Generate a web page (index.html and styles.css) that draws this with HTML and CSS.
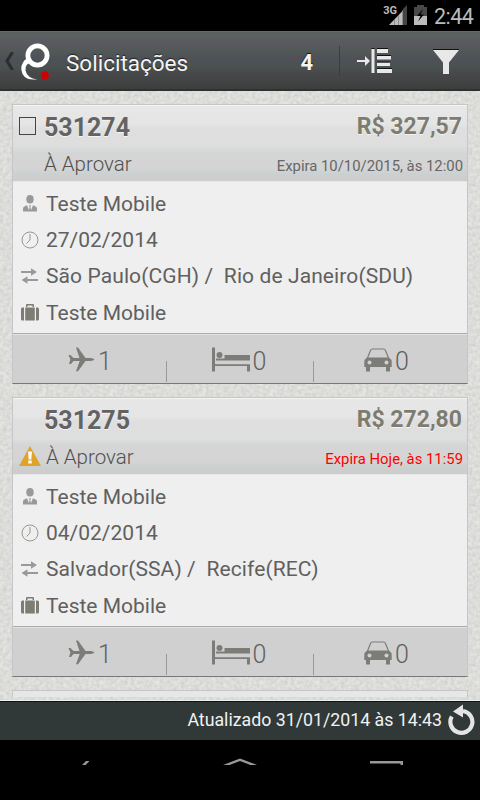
FILE: index.html
```html
<!DOCTYPE html>
<html lang="pt-BR">
<head>
  <meta charset="utf-8">
  <meta name="viewport" content="width=device-width, initial-scale=1">
  <title>Solicitações</title>
  <link rel="stylesheet" href="styles.css">
</head>
<body>
  <svg class="sprite">
    <symbol id="user" viewBox="0 0 14 17">
      <ellipse cx="7" cy="4.3" rx="3.7" ry="4.3"/>
      <path d="M0 16.5v-3q0-2 4-3.2l2 5 .6-3.6-.6-1.4h2l-.6 1.4.6 3.6 2-5q4 1.200 4 3.200v3z"/>
    </symbol>
    <symbol id="clock" viewBox="0 0 18 18">
      <circle cx="9" cy="9" r="8" fill="none" stroke="currentColor"/>
      <path d="M9 3v6l-3.500 3.500" fill="none" stroke="currentColor"/>
    </symbol>
    <symbol id="route" viewBox="0 0 17 16">
      <path d="M0 3h10V.3l6 3.700-6 3.700V5H0zM17 11H6.500V8.200L.5 12l6 3.700V13H17z"/>
    </symbol>
    <symbol id="bag" viewBox="0 0 18 17">
      <path d="M5 3V1q0-1 1-1h6q1 0 1 1v2h-1.500V1.500h-5V3zM1.500 3.500H3v13H1.500Q0 16.500 0 15V5q0-1.500 1.500-1.500zM4.200 3.500h9.600v13H4.200zM15 3.500h1.500Q18 3.500 18 5v10q0 1.500-1.500 1.500H15z"/>
    </symbol>
    <symbol id="plane" viewBox="0 0 27 25">
      <path d="M26.500 12.500q-1 1.300-4 1.500h-5L10 24.300H8L11.700 14H5.500L3 17H1l1.400-4.500L.5 8H2.500L5.500 11h6L8 .5h2L17.500 11h5q3 .2 4 1.500z"/>
    </symbol>
    <symbol id="bed" viewBox="0 0 39 25">
      <path d="M0 .5h3v24H0zM4 11.500h8.500V8H38v16.500h-3V19H3v-1.800h35V13.500H4z"/>
      <path d="M3 15h36" stroke="#d0d0d0"/>
      <circle cx="7.500" cy="8" r="3"/>
    </symbol>
    <symbol id="car" viewBox="0 0 28 24">
      <path d="M3.500 10L6.500 2.500Q7 1 8.500 1h11q1.500 0 2 1.500L24.500 10" fill="none" stroke="currentColor" stroke-width="1.200"/>
      <path d="M3 9.500h22q2.700 1.500 2.700 5V19H26v4.500h-4V19H6v4.500H2V19H.3v-4.500q0-3.500 2.700-5z"/>
      <circle cx="5.500" cy="14.500" r="2" fill="#d0d0d0"/>
      <circle cx="22.500" cy="14.500" r="2" fill="#d0d0d0"/>
    </symbol>
  </svg>

  <div class="status">
    <span class="net">3G</span>
    <svg class="signal" width="18" height="20" viewBox="0 0 18 20"><path d="M14 4l4-4v20h-4z" fill="#444"/><path d="M0 20L14 5.500V20z" fill="#bbb"/><path d="M5.500 14v6M9.500 10v10M13.500 5v15" stroke="#777" stroke-width=".7"/></svg>
    <svg class="battery" width="13" height="20" viewBox="0 0 13 20"><path d="M0 2h3V0h7v2h3v9H0z" fill="#484848"/><path d="M0 11h13v9H0z" fill="#bbb"/><path d="M9 4L3 11h3.500L4 16.500 10 9.500H6.500z" fill="#000"/></svg>
    <span class="time">2:44</span>
  </div>

  <header class="topbar">
    <svg class="back" width="9" height="18" viewBox="0 0 9 18"><path d="M7.500 0L2 9l5.500 9" fill="none" stroke="#2c2e2e" stroke-width="3"/></svg>
    <svg class="logo" width="30" height="38" viewBox="0 0 30 38">
      <circle cx="16.500" cy="12.500" r="9.600" fill="none" stroke="#fff" stroke-width="4.800"/>
      <path d="M8 14.500Q0 18 .3 26.500 1.500 37 13 36.500h3.500Q6 35 4.500 27.500 4 20 10 20z" fill="#fff"/>
      <circle cx="24" cy="32.500" r="3.900" fill="#d00000"/>
    </svg>
    <h1>Solicitações</h1>
    <b class="total">4</b>
    <div class="sort">
      <svg width="36" height="26" viewBox="0 0 36 26"><path d="M0 12h8V8l5 5-5 5v-4H0zM14.500 1h3v24h-3zM20 1h11v4H20zM20 8h14v3.500H20zM20 14.500h13V18H20zM20 21h15v4H20z" fill="#e8e8e8"/><path d="M14.500.5h3M20 .5h11M20 7.500h14M20 14h13M20 20.500h15" stroke="#111"/></svg>
    </div>
    <svg class="filter" width="26" height="26" viewBox="0 0 26 26"><path d="M0 1h26L16 13.500V25h-6V13.500z" fill="#e8e8e8"/><path d="M0 .5h26" stroke="#111"/></svg>
  </header>

  <main class="list">
    <article class="card">
      <div class="card-head">
        <div class="line">
          <span class="mark"><i class="checkbox"></i></span>
          <span class="code">531274</span>
          <span class="price">R$ 327,57</span>
        </div>
        <div class="line state">
          <span class="mark"></span>
          <span class="label">À Aprovar</span>
          <span class="expires">Expira 10/10/2015, às 12:00</span>
        </div>
      </div>
      <ul class="info">
        <li><svg class="i-user"><use href="#user"/></svg><span class="name">Teste Mobile</span></li>
        <li><svg class="i-clock"><use href="#clock"/></svg><span class="date">27/02/2014</span></li>
        <li><svg class="i-route"><use href="#route"/></svg><span class="trip">São Paulo(CGH) /&nbsp; Rio de Janeiro(SDU)</span></li>
        <li><svg class="i-bag"><use href="#bag"/></svg><span class="name">Teste Mobile</span></li>
      </ul>
      <div class="counts">
        <span><svg class="i-plane"><use href="#plane"/></svg>1</span>
        <span><svg class="i-bed"><use href="#bed"/></svg>0</span>
        <span><svg class="i-car"><use href="#car"/></svg>0</span>
      </div>
    </article>

    <article class="card">
      <div class="card-head">
        <div class="line">
          <span class="mark"></span>
          <span class="code">531275</span>
          <span class="price">R$ 272,80</span>
        </div>
        <div class="line state late">
          <span class="mark"><svg class="warn" width="22" height="20" viewBox="0 0 22 20"><path d="M11 0l11 20H0z" fill="#dfa32b"/><path d="M9 5.500h4l-.7 8h-2.600zM9.300 14.500h3.400v3H9.300z" fill="#fff"/></svg></span>
          <span class="label">À Aprovar</span>
          <span class="expires">Expira Hoje, às 11:59</span>
        </div>
      </div>
      <ul class="info">
        <li><svg class="i-user"><use href="#user"/></svg><span class="name">Teste Mobile</span></li>
        <li><svg class="i-clock"><use href="#clock"/></svg><span class="date">04/02/2014</span></li>
        <li><svg class="i-route"><use href="#route"/></svg><span class="trip">Salvador(SSA) /&nbsp; Recife(REC)</span></li>
        <li><svg class="i-bag"><use href="#bag"/></svg><span class="name">Teste Mobile</span></li>
      </ul>
      <div class="counts">
        <span><svg class="i-plane"><use href="#plane"/></svg>1</span>
        <span><svg class="i-bed"><use href="#bed"/></svg>0</span>
        <span><svg class="i-car"><use href="#car"/></svg>0</span>
      </div>
    </article>

    <article class="card next"></article>
  </main>

  <footer class="updated">
    <span>Atualizado 31/01/2014 às 14:43</span>
    <svg width="28" height="32" viewBox="0 0 28 32"><path d="M3.800 12.500A11 11 0 1 0 15 7" fill="none" stroke="#e4e4e4" stroke-width="4.200"/><path d="M5 7.500L15 .5v13z" fill="#e4e4e4"/></svg>
  </footer>

  <nav class="keys">
    <svg width="480" height="25" viewBox="0 0 480 25"><path d="M82 25l4-4h3.500l-4 4zM223 25l17-6.500L257 25h-6.500L240 21l-10.500 4zM370 21h33v4h-2.500v-1.500H370z" fill="#999"/></svg>
  </nav>
</body>
</html>
```
FILE: styles.css
```css
* { box-sizing: border-box; }

body {
  margin: 0;
  width: 480px;
  height: 800px;
  overflow: hidden;
  display: flex;
  flex-direction: column;
  background: #000;
  color: #606060;
  font-family: Roboto, "Noto Sans", sans-serif;
}

svg     { display: block; flex: none; fill: currentColor; }
span, b { white-space: nowrap; }
.sprite { display: none; }

/* status bar */
.status {
  height: 31px;
  flex: none;
  display: flex;
  align-items: flex-start;
  justify-content: flex-end;
  padding: 5px 7px 0 0;
  color: #bbb;
}
.net     { font-size: 11px; line-height: 12px; font-weight: bold; margin-right: -8px; }
.signal  { margin-right: 7px; }
.battery { margin-right: 7px; }
.time    { font-size: 21.500px; line-height: 24px; width: 39px; letter-spacing: -.5px; }

/* top bar */
.topbar {
  height: 60px;
  flex: none;
  display: flex;
  align-items: center;
  padding: 0 21px 0 5px;
  border-top: 1px solid #686868;
  border-bottom: 2px solid #303030;
  background: linear-gradient(#5b605f 0, #596260 8%, #5a5960 20%, #505855 36%, #50505a 45%, #495350 60%, #48484b 72%, #424544 85%, #3d3d3d 100%);
  color: #f4f4f4;
}
.logo { margin: 2px 0 0 7px; }
h1 {
  margin: 4px auto 0 15px;
  font-size: 22.500px;
  line-height: 28px;
  font-weight: normal;
  text-shadow: 0 -1px 1px #222;
}
.total { font-size: 22px; margin: 3px 26px 0 0; text-shadow: 0 -1px 1px #111; }
.sort  { border-left: 1px solid #3a3d3d; height: 30px; padding: 2px 0 0 17px; margin-right: 40px; }
.filter { margin-top: 2px; }

/* list */
.list {
  height: 610px;
  flex: none;
  overflow: hidden;
  padding: 13px 12px 0;
  border-bottom: 1px solid #efefef;
  background: #dcdcd9 url("data:image/svg+xml,%3Csvg xmlns='http://www.w3.org/2000/svg' width='160' height='160'%3E%3Cfilter id='n' x='0' y='0' width='100%25' height='100%25' color-interpolation-filters='sRGB'%3E%3CfeTurbulence type='fractalNoise' baseFrequency='.28' numOctaves='3' stitchTiles='stitch'/%3E%3CfeColorMatrix values='.14 0 0 0 .793 .14 0 0 0 .793 .14 0 0 0 .783 0 0 0 0 1'/%3E%3C/filter%3E%3Crect width='160' height='160' filter='url(%23n)'/%3E%3C/svg%3E");
}

.card {
  height: 280px;
  margin-bottom: 13px;
  border: 1px solid #c6c6c6;
  border-bottom-color: #777;
  background: #efefef;
}
.next { height: 7px; border-bottom: 0; background: #e7e7e7; }

.card-head {
  height: 77px;
  padding: 0 4px 0 6px;
  border-top: 1px solid #f4f4f4;
  border-bottom: 1px solid #e6e6e6;
  background: linear-gradient(#e7e7e7 0, #e5e5e5 18px, #dfdfdf 22px, #dedede 40px, #d6dada 44px, #d5d5d5 47px, #d4d4d4 63px, #cbd1d1 67px, #cecece 70px, #cdcdcd 100%);
}
.line { display: flex; align-items: center; height: 41px; }
.mark { width: 25px; flex: none; }
.checkbox { display: block; width: 17px; height: 18px; margin-top: -2px; border: 1px solid #444; }
.code     { font-size: 25px; font-weight: bold; color: #636363; text-shadow: 0 1px #f4f4f4; padding-top: 1px; }
.price    { font-size: 23px; font-weight: bold; color: #7c7c70; text-shadow: 0 1px #f4f4f4; margin-left: auto; padding: 0 1px 1px 0; }
.state    { height: 34px; }
.label    { font-size: 20.500px; font-weight: 300; color: #505050; }
.expires  { font-size: 14.850px; margin-left: auto; padding-top: 4px; color: #666; }
.warn     { margin-top: -2px; }
.late .mark    { width: 27px; }
.late .expires { color: #f00; }

.info {
  list-style: none;
  margin: 0;
  padding: 3px 0 0 8px;
  height: 151px;
  font-size: 21px;
}
.info li   { display: flex; align-items: center; height: 36.400px; }
.info span { padding-top: 1px; }
.info svg  { color: #999; }
.info .trip    { letter-spacing: .1px; }
.info .i-user  { width: 14px; height: 17px; margin: 0 9px 0 2px; }
.info .i-clock { width: 18px; height: 18px; margin-right: 7px; color: #95998f; }
.info .i-route { width: 17px; height: 16px; margin-right: 8px; }
.info .i-bag   { width: 18px; height: 17px; margin-right: 7px; color: #7d7d73; }

.counts {
  display: flex;
  height: 50px;
  border-top: 1px solid #aaa;
  box-shadow: inset 0 1px #e3e3e3;
  background: #d0d0d0;
  font-size: 25px;
  font-weight: 300;
}
.counts span {
  display: flex;
  align-items: center;
  justify-content: center;
  gap: 2px;
  width: 147px;
  padding: 5px 3px 0 0;
  background: linear-gradient(#999, #999) right 27px / 1px 21px no-repeat;
}
.counts span:first-child { width: 154px; padding-right: 0; gap: 3px; }
.counts span:last-child  { flex: 1; padding-right: 8px; gap: 3px; background: none; }
.counts svg { color: #7c7c78; margin-top: -3px; }
.i-plane { width: 27px; height: 25px; }
.i-bed   { width: 39px; height: 25px; }
.i-car   { width: 28px; height: 24px; }

/* footer */
.updated {
  height: 39px;
  flex: none;
  display: flex;
  align-items: center;
  justify-content: flex-end;
  gap: 6px;
  padding: 0 4px 2px 0;
  border-top: 1px solid #0b1418;
  background: #303938;
  color: #f1f1f1;
  font-size: 17.750px;
}
.keys { height: 60px; flex: none; }
```
